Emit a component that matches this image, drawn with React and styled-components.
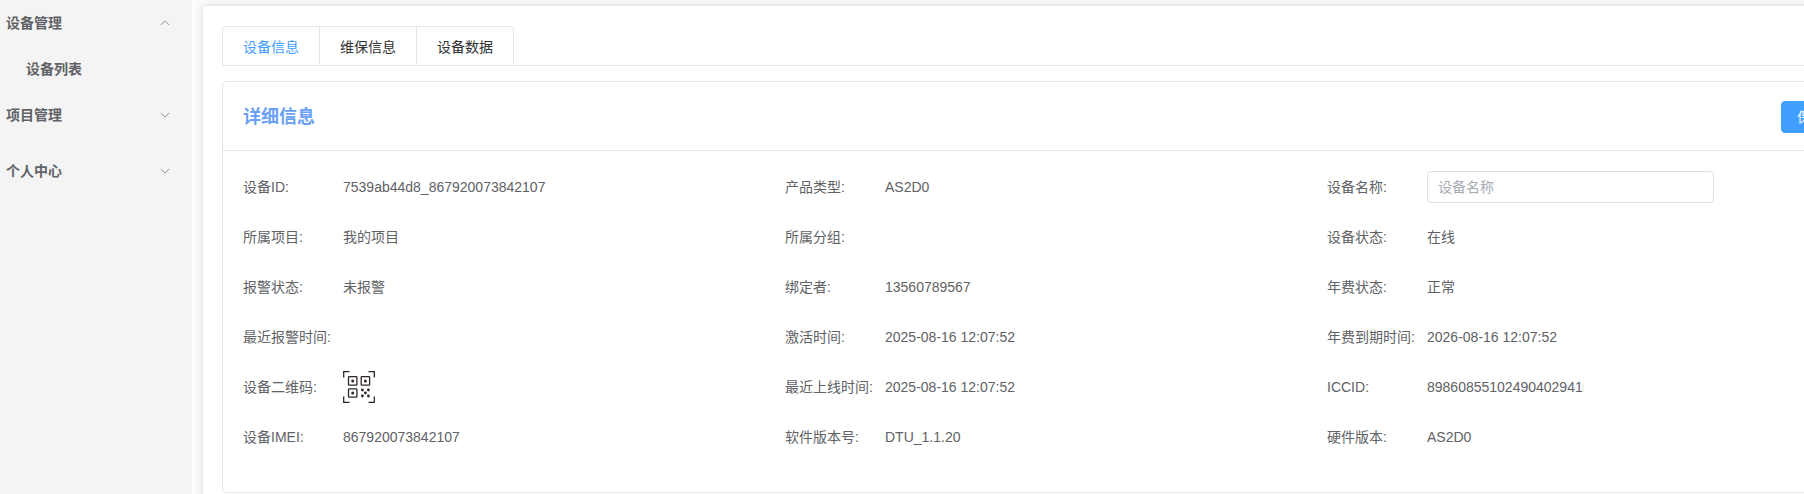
// App.jsx
import React, { useState } from 'react';
import styled, { createGlobalStyle } from 'styled-components';

const GlobalStyle = createGlobalStyle`
  * {
    box-sizing: border-box;
  }

  body {
    margin: 0;
    overflow: hidden;
    background: #fdfdfd;
    color: #606266;
    font-family: "Liberation Sans", Arial, "Noto Sans CJK SC", sans-serif;
    font-size: 14px;
    line-height: 20px;
  }

  button,
  input {
    font: inherit;
  }
`;

/* The console is designed for wide monitors, narrower windows cut the right side */
const Layout = styled.div`
  display: flex;
  min-width: 1920px;
  min-height: 100vh;
`;

const Sidebar = styled.nav`
  flex: 0 0 192px;
  display: flex;
  flex-direction: column;
  background: #f4f4f4;
`;

const MenuGroup = styled.div`
  margin-bottom: ${(props) => (props.$spaced ? '10px' : '0')};
`;

const MenuTitle = styled.button`
  display: flex;
  align-items: center;
  justify-content: space-between;
  width: 100%;
  height: 46px;
  padding: 0 22px 0 6px;
  border: none;
  background: none;
  color: #606266;
  font-weight: bold;
  cursor: pointer;
`;

const Arrow = styled.svg`
  width: 10px;
  height: 10px;
  fill: none;
  stroke: #909399;
  transform: ${(props) => (props.$open ? 'rotate(180deg)' : 'none')};
`;

const MenuLink = styled.a`
  display: flex;
  align-items: center;
  height: 46px;
  padding-left: 26px;
  color: #606266;
  font-weight: bold;
  text-decoration: none;
`;

const Panel = styled.main`
  flex: 1;
  margin: 5px 10px;
  padding: 20px 19px;
  border: 1px solid #e4e7ed;
  border-radius: 4px;
  background: #fff;
  box-shadow: 0 0 12px rgba(0, 0, 0, 0.12);
`;

const TabBar = styled.div`
  display: flex;
  border-bottom: 1px solid #e4e7ed;
`;

const TabList = styled.div`
  display: flex;
  border: 1px solid #e4e7ed;
  border-bottom: none;
  border-radius: 4px 4px 0 0;
`;

const Tab = styled.button`
  height: 38px;
  padding: 2px 20px 0;
  border: none;
  border-left: 1px solid #e4e7ed;
  background: none;
  color: ${(props) => (props.$active ? '#409eff' : '#303133')};
  cursor: pointer;

  &:first-child {
    border-left: none;
  }
`;

const Card = styled.section`
  margin-top: 15px;
  border: 1px solid #e4e7ed;
  border-radius: 4px;
`;

const CardHeader = styled.header`
  display: flex;
  align-items: center;
  justify-content: space-between;
  padding: 19px 20px 17px;
  border-bottom: 1px solid #e4e7ed;
`;

const CardTitle = styled.h2`
  margin: 0;
  color: #6aa1f4;
  font-size: 18px;
  line-height: 26px;
`;

const SaveButton = styled.button`
  height: 32px;
  padding: 0 15px;
  border: 1px solid #409eff;
  border-radius: 4px;
  background: #409eff;
  color: #fff;
  cursor: pointer;
`;

const Fields = styled.form`
  display: grid;
  grid-template-columns: repeat(3, 1fr);
  row-gap: 18px;
  padding: 20px 20px 39px;
`;

const Field = styled.div`
  display: flex;
  align-items: center;
  min-height: 32px;
`;

const FieldLabel = styled.label`
  flex: 0 0 100px;
  white-space: nowrap;
`;

const FieldValue = styled.div`
  flex: 1;
`;

const TextInput = styled.input`
  display: block;
  width: 65%;
  height: 32px;
  padding: 0 10px;
  border: 1px solid #dcdfe6;
  border-radius: 4px;
  color: #606266;
  outline: none;

  &::placeholder {
    color: #a8abb2;
  }
`;

const QrImage = styled.svg`
  display: block;
  width: 32px;
  height: 32px;
`;

const menus = [
  { title: '设备管理', items: ['设备列表'] },
  { title: '项目管理', items: [], spaced: true },
  { title: '个人中心', items: [] },
];

const tabs = ['设备信息', '维保信息', '设备数据'];

const fields = [
  { label: '设备ID', value: '7539ab44d8_867920073842107' },
  { label: '产品类型', value: 'AS2D0' },
  { label: '设备名称', type: 'input' },
  { label: '所属项目', value: '我的项目' },
  { label: '所属分组', value: '' },
  { label: '设备状态', value: '在线' },
  { label: '报警状态', value: '未报警' },
  { label: '绑定者', value: '13560789567' },
  { label: '年费状态', value: '正常' },
  { label: '最近报警时间', value: '' },
  { label: '激活时间', value: '2025-08-16 12:07:52' },
  { label: '年费到期时间', value: '2026-08-16 12:07:52' },
  { label: '设备二维码', type: 'qrcode' },
  { label: '最近上线时间', value: '2025-08-16 12:07:52' },
  { label: 'ICCID', value: '89860855102490402941' },
  { label: '设备IMEI', value: '867920073842107' },
  { label: '软件版本号', value: 'DTU_1.1.20' },
  { label: '硬件版本', value: 'AS2D0' },
];

function QrCode() {
  return (
    <QrImage viewBox="0 0 32 32" role="img" aria-label="设备二维码">
      <g fill="none" stroke="#2f2725" strokeWidth="1.3">
        <path d="M.7 6.5V.7h5.8M25.5.7h5.8v5.8M31.3 25.5v5.8h-5.8M6.5 31.3H.7v-5.8" />
        <rect x="5.5" y="5.7" width="8.4" height="8.4" rx=".6" />
        <rect x="18.2" y="5.7" width="8.4" height="8.4" rx=".6" />
        <rect x="5.5" y="17.8" width="8.4" height="8.4" rx=".6" />
      </g>
      <g fill="#2f2725">
        <circle cx="9.7" cy="9.9" r="1.5" />
        <circle cx="22.4" cy="9.9" r="1.5" />
        <circle cx="9.7" cy="22" r="1.5" />
        <circle cx="19.4" cy="19" r="1.4" />
        <circle cx="25.4" cy="19" r="1.4" />
        <circle cx="22.4" cy="22" r="1.4" />
        <circle cx="19.4" cy="25" r="1.4" />
        <circle cx="25.4" cy="25" r="1.4" />
      </g>
    </QrImage>
  );
}

function App() {
  const [openMenu, setOpenMenu] = useState('设备管理');
  const [activeTab, setActiveTab] = useState('设备信息');
  const [deviceName, setDeviceName] = useState('');

  const toggleMenu = (title) => {
    setOpenMenu(openMenu === title ? '' : title);
  };

  const renderValue = (field) => {
    if (field.type === 'input') {
      return (
        <TextInput
          id="deviceName"
          placeholder="设备名称"
          value={deviceName}
          onChange={(event) => setDeviceName(event.target.value)}
        />
      );
    }
    if (field.type === 'qrcode') {
      return <QrCode />;
    }
    return field.value;
  };

  return (
    <>
      <GlobalStyle />
      <Layout>
        <Sidebar>
          {menus.map((menu) => (
            <MenuGroup key={menu.title} $spaced={menu.spaced}>
              <MenuTitle onClick={() => toggleMenu(menu.title)}>
                {menu.title}
                <Arrow viewBox="0 0 10 10" $open={openMenu === menu.title}>
                  <path d="M.8 3L5 7.2 9.2 3" />
                </Arrow>
              </MenuTitle>
              {openMenu === menu.title &&
                menu.items.map((item) => (
                  <MenuLink key={item} href="#">{item}</MenuLink>
                ))}
            </MenuGroup>
          ))}
        </Sidebar>

        <Panel>
          <TabBar>
            <TabList role="tablist">
              {tabs.map((tab) => (
                <Tab
                  key={tab}
                  role="tab"
                  aria-selected={activeTab === tab}
                  $active={activeTab === tab}
                  onClick={() => setActiveTab(tab)}
                >
                  {tab}
                </Tab>
              ))}
            </TabList>
          </TabBar>

          <Card>
            <CardHeader>
              <CardTitle>详细信息</CardTitle>
              <SaveButton type="submit" form="deviceForm">保存信息</SaveButton>
            </CardHeader>
            <Fields id="deviceForm" onSubmit={(event) => event.preventDefault()}>
              {fields.map((field) => (
                <Field key={field.label}>
                  {field.type === 'input' ? (
                    <FieldLabel htmlFor="deviceName">{field.label}:</FieldLabel>
                  ) : (
                    <FieldLabel as="span">{field.label}:</FieldLabel>
                  )}
                  <FieldValue>{renderValue(field)}</FieldValue>
                </Field>
              ))}
            </Fields>
          </Card>
        </Panel>
      </Layout>
    </>
  );
}

export default App;
